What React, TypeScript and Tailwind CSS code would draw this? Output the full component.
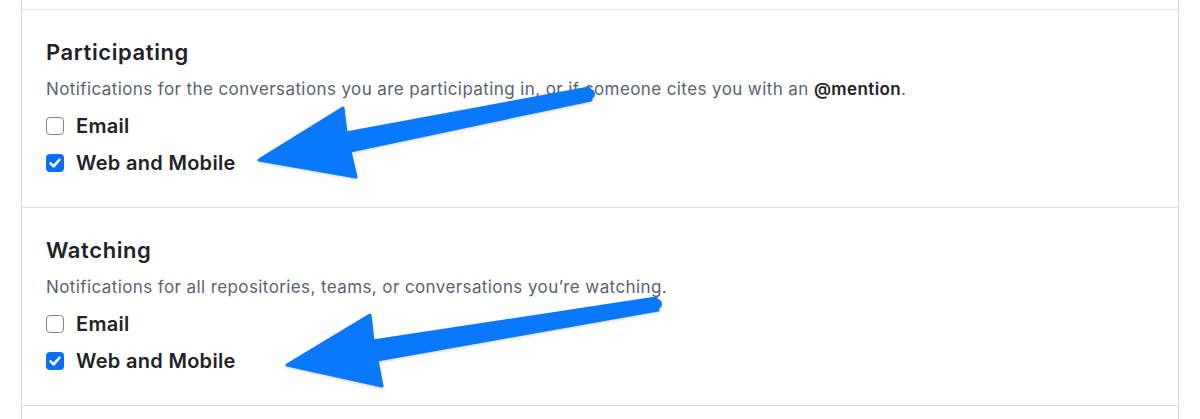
import React from "react";

type Option = { label: string; checked: boolean };

interface Section {
  title: string;
  description: React.ReactNode;
  options: Option[];
}

const sections: Section[] = [
  {
    title: "Participating",
    description: (
      <>
        Notifications for the conversations you are participating in, or if someone cites you with an{" "}
        <strong className="font-semibold text-[#1f2328]">@mention</strong>.
      </>
    ),
    options: [
      { label: "Email", checked: false },
      { label: "Web and Mobile", checked: true },
    ],
  },
  {
    title: "Watching",
    description: "Notifications for all repositories, teams, or conversations you’re watching.",
    options: [
      { label: "Email", checked: false },
      { label: "Web and Mobile", checked: true },
    ],
  },
];

function Checkbox({ checked }: { checked: boolean }) {
  if (checked) {
    return (
      <span className="flex h-[18px] w-[18px] shrink-0 items-center justify-center rounded-[4px] bg-[#0a6ff6]">
        <svg width="14" height="14" viewBox="0 0 12 12" fill="none">
          <path d="M2.2 6.3 4.8 8.9 9.8 3.2" stroke="white" strokeWidth="2.2" strokeLinecap="round" strokeLinejoin="round" />
        </svg>
      </span>
    );
  }
  return <span className="h-[18px] w-[18px] shrink-0 rounded-[4px] border-[1.5px] border-[#7d858e] bg-white" />;
}

function Arrow({ points, tail }: { points: string; tail: [number, number] }) {
  return (
    <g fill="#0a78fb" stroke="#0a78fb" strokeWidth="3" strokeLinejoin="round">
      <polygon points={points} />
      <circle cx={tail[0]} cy={tail[1]} r="5" stroke="none" />
    </g>
  );
}

export default function App() {
  return (
    <div className="relative h-[419px] w-[1200px] overflow-hidden bg-white" style={{ fontFamily: "Inter, 'Noto Sans', sans-serif" }}>
      <div className="mx-[21px] h-full border-x border-[#d8dee4] pt-[9px]">
        {sections.map((s) => (
          <div key={s.title} className="border-t border-[#d8dee4] px-[24px] pt-[27px] pb-[26px]">
            <h2 className="h-[30px] text-[22px] font-semibold leading-[30px] tracking-[0.6px] text-[#1f2328]">{s.title}</h2>
            <p className="mt-[10px] h-[24px] whitespace-nowrap text-[17px] leading-[24px] tracking-[0.4px] text-[#59636e]">{s.description}</p>
            <div className="mt-[6px]">
              {s.options.map((o) => (
                <label key={o.label} className="flex h-[37px] items-center gap-[12px]">
                  <Checkbox checked={o.checked} />
                  <span className="text-[20px] font-semibold tracking-[0.3px] text-[#1f2328]">{o.label}</span>
                </label>
              ))}
            </div>
          </div>
        ))}
        <div className="border-t border-[#d8dee4]" />
      </div>

      <svg className="pointer-events-none absolute left-0 top-0" width="1200" height="419" style={{ filter: "drop-shadow(0 1px 1.5px rgba(0,0,0,0.18))" }}>
        <Arrow points="259,160 343,108 346,133 589,88 591,100 350,151 356,177" tail={[590, 94]} />
        <Arrow points="287,365 370,315 373,341 656,298 658,310 377,360 382,386" tail={[657, 304]} />
      </svg>
    </div>
  );
}
